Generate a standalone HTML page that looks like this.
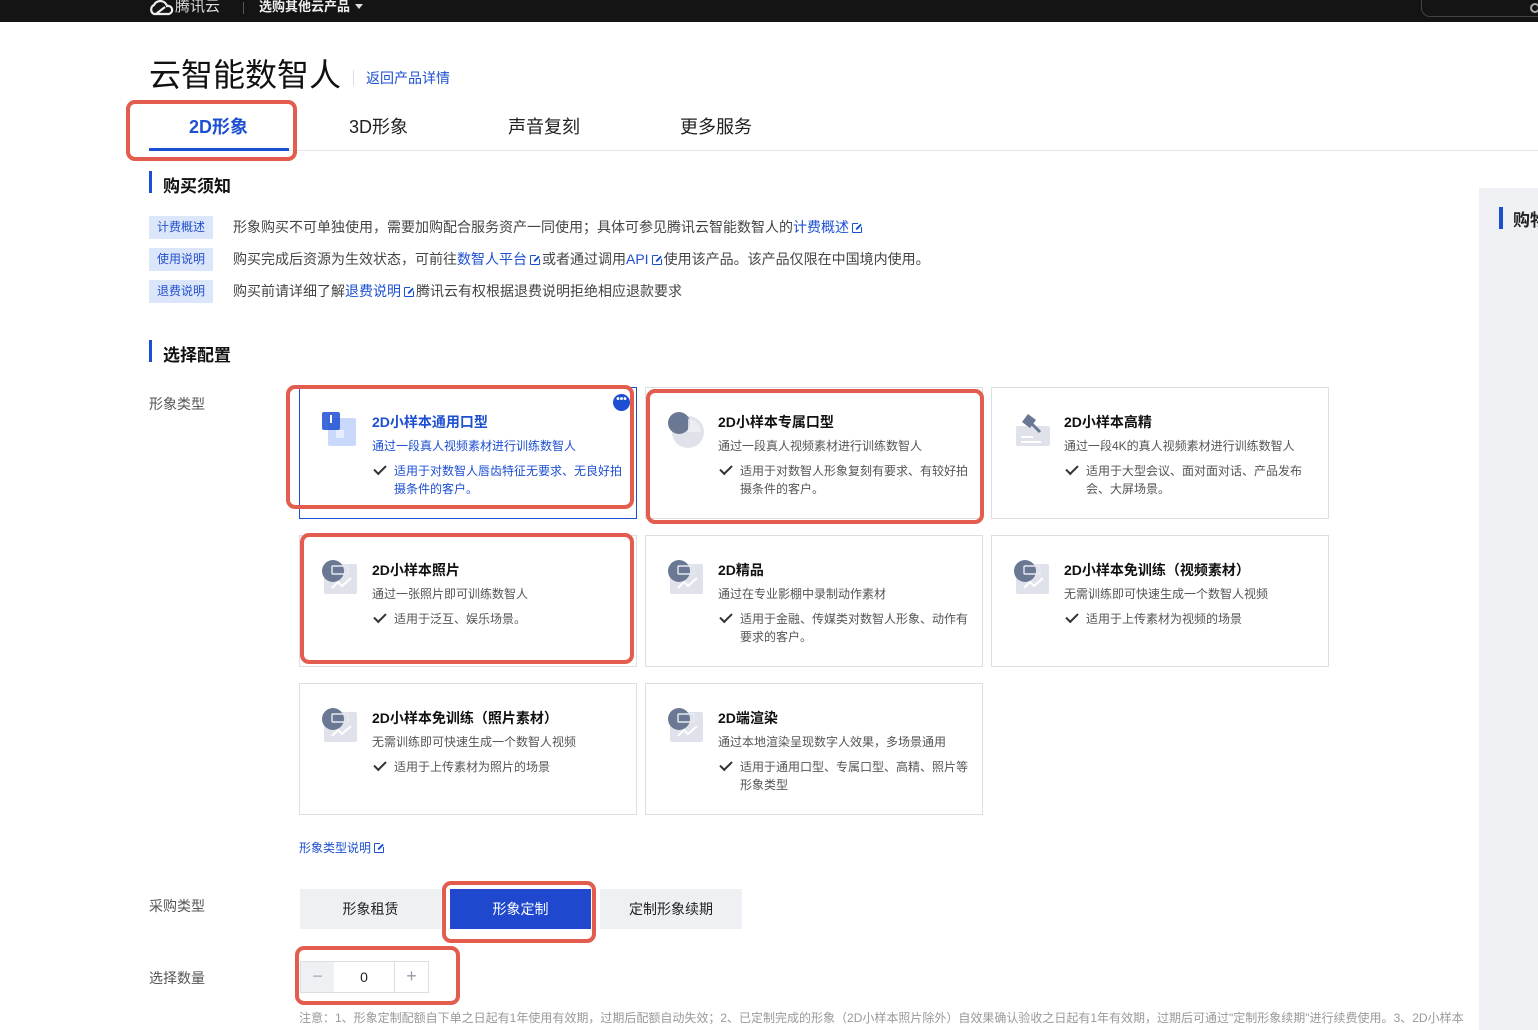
<!DOCTYPE html>
<html><head><meta charset="utf-8">
<style>
*{margin:0;padding:0;box-sizing:border-box}
body{width:1538px;height:1030px;position:relative;overflow:hidden;background:#fff;font-family:"Liberation Sans","Noto Sans CJK SC",sans-serif;color:#222}
.a{position:absolute;white-space:nowrap}
.red{position:absolute;border:4px solid #e35d4f;border-radius:9px}
.card{position:absolute;width:338px;height:132px;border:1px solid #dcdee3;background:#fff}
.card .ic{position:absolute;left:22px;top:24px;width:36px;height:36px}
.card .t{position:absolute;left:72px;top:24px;font-size:14px;font-weight:bold;color:#111}
.card .d{position:absolute;left:72px;top:49px;font-size:12px;color:#555}
.card .k{position:absolute;left:72px;top:74px;font-size:12px;color:#555;line-height:18px;width:258px;padding-left:22px;white-space:normal}
.card .k:before{content:"";position:absolute;left:2px;top:3px;width:10px;height:5px;border-left:2px solid #333;border-bottom:2px solid #333;transform:rotate(-45deg)}
.tag{position:absolute;left:149px;width:64px;height:23px;background:#dbe6fb;color:#2350cc;font-size:12px;text-align:center;line-height:23px}
.row{position:absolute;left:233px;font-size:14px;color:#444;white-space:nowrap}
.bl{color:#1d4fd1}
.ext{display:inline-block;width:10px;height:10px;border:1.6px solid #1d4fd1;margin:0 2px 0 3px;vertical-align:-1px;position:relative;border-radius:1px}
.ext:after{content:"";position:absolute;right:-2px;top:-2px;width:5px;height:5px;background:#fff;}
.ext:before{content:"";position:absolute;right:-1px;top:2px;width:7px;height:1.6px;background:#1d4fd1;transform:rotate(-45deg);z-index:1}
.h2{position:absolute;left:149px;font-size:17px;font-weight:bold;color:#111;padding-left:14px}
.h2:before{content:"";position:absolute;left:0;top:-1px;width:3px;height:22px;background:#1d4fd1}
.lbl{position:absolute;left:149px;font-size:14px;color:#555}
.btn{position:absolute;top:889px;height:40px;font-size:14px;text-align:center;line-height:40px;background:#eef0f3;color:#222}
</style></head><body>
<div class="a" style="left:0;top:0;width:1538px;height:22px;background:#141414"></div>
<svg class="a" style="left:148px;top:0" width="28" height="16" viewBox="0 0 28 16"><path d="M6 14a5 5 0 0 1 0-9a7 7 0 0 1 13 1a4 4 0 0 1 2 8z M8 14l9-7" fill="none" stroke="#eee" stroke-width="2.2"/></svg>
<div class="a" style="left:175px;top:-5px;font-size:15px;color:#ddd">腾讯云</div>
<div class="a" style="left:243px;top:2px;width:1px;height:12px;background:#555"></div>
<div class="a" style="left:259px;top:-4px;font-size:13px;font-weight:bold;color:#eee">选购其他云产品</div>
<div class="a" style="left:355px;top:4px;border:4px solid transparent;border-top:5px solid #ddd"></div>
<div class="a" style="left:1421px;top:-10px;width:140px;height:27px;border:1px solid #444;border-radius:9px"></div>
<div class="a" style="left:1530px;top:3px;width:10px;height:10px;border:2px solid #aaa;border-radius:50%"></div>

<div class="a" style="left:149px;top:50px;font-size:32px;color:#111">云智能数智人</div>
<div class="a" style="left:353px;top:70px;width:1px;height:16px;background:#ddd"></div>
<div class="a bl" style="left:366px;top:68px;font-size:14px">返回产品详情</div>

<div class="a" style="left:149px;top:150px;width:1389px;height:1px;background:#e3e5ea"></div>
<div class="a" style="left:189px;top:113px;font-size:18px;font-weight:bold;color:#1d4fd1">2D形象</div>
<div class="a" style="left:149px;top:148px;width:140px;height:3px;background:#1d4fd1"></div>
<div class="a" style="left:349px;top:113px;font-size:18px">3D形象</div>
<div class="a" style="left:508px;top:113px;font-size:18px">声音复刻</div>
<div class="a" style="left:680px;top:113px;font-size:18px">更多服务</div>
<div class="red" style="left:126px;top:100px;width:171px;height:61px"></div>

<div class="a" style="left:1479px;top:188px;width:59px;height:842px;background:#eef0f3"></div>
<div class="a" style="left:1499px;top:207px;width:4px;height:22px;background:#1d4fd1"></div>
<div class="a" style="left:1513px;top:206px;font-size:17px;font-weight:bold">购物</div>

<div class="h2" style="top:172px">购买须知</div>
<div class="tag" style="top:216px">计费概述</div>
<div class="tag" style="top:248px">使用说明</div>
<div class="tag" style="top:280px">退费说明</div>
<div class="row" style="top:217px">形象购买不可单独使用，需要加购配合服务资产一同使用；具体可参见腾讯云智能数智人的<span class="bl">计费概述</span><span class="ext"></span></div>
<div class="row" style="top:249px">购买完成后资源为生效状态，可前往<span class="bl">数智人平台</span><span class="ext"></span>或者通过调用<span class="bl">API</span><span class="ext"></span>使用该产品。该产品仅限在中国境内使用。</div>
<div class="row" style="top:281px">购买前请详细了解<span class="bl">退费说明</span><span class="ext"></span>腾讯云有权根据退费说明拒绝相应退款要求</div>

<div class="h2" style="top:341px">选择配置</div>
<div class="lbl" style="top:394px">形象类型</div>

<div class="card" style="left:299px;top:387px;border-color:#1d4fd1">
 <svg class="ic" viewBox="0 0 36 36"><rect x="6" y="6" width="28" height="28" rx="2" fill="#c9d9fb"/><rect x="0" y="0" width="18" height="18" rx="2" fill="#1d4fd1" opacity=".85"/><rect x="14" y="18" width="8" height="8" fill="#e6eefd"/><rect x="8" y="3" width="2" height="8" fill="#fff"/></svg>
 <div class="t" style="color:#1d4fd1">2D小样本通用口型</div>
 <div class="d" style="color:#1d4fd1">通过一段真人视频素材进行训练数智人</div>
 <div class="k" style="color:#1d4fd1">适用于对数智人唇齿特征无要求、无良好拍摄条件的客户。</div>
 <div style="position:absolute;right:6px;top:6px;width:17px;height:17px;border-radius:50%;background:#1d4fd1;color:#fff;font-size:10px;line-height:12px;text-align:center;font-weight:bold">•••</div>
</div>
<div class="card" style="left:645px;top:387px">
 <svg class="ic" viewBox="0 0 36 36"><circle cx="20" cy="20" r="16" fill="#dfe2ea"/><circle cx="11" cy="11" r="11" fill="#6b7894"/><path d="M20 7a13 13 0 0 1 13 13h-13z" fill="#eef0f4" opacity=".8"/></svg>
 <div class="t">2D小样本专属口型</div><div class="d">通过一段真人视频素材进行训练数智人</div>
 <div class="k">适用于对数智人形象复刻有要求、有较好拍摄条件的客户。</div>
</div>
<div class="card" style="left:991px;top:387px">
 <svg class="ic" viewBox="0 0 36 36"><rect x="2" y="14" width="34" height="20" rx="2" fill="#dfe2ea"/><path d="M14 2l8 6-6 8-8-6z" fill="#6b7894"/><path d="M18 12l8 8" stroke="#6b7894" stroke-width="3"/><rect x="7" y="24" width="12" height="2" fill="#fff"/><rect x="7" y="29" width="20" height="2" fill="#fff"/></svg>
 <div class="t">2D小样本高精</div><div class="d">通过一段4K的真人视频素材进行训练数智人</div>
 <div class="k">适用于大型会议、面对面对话、产品发布会、大屏场景。</div>
</div>

<div class="card" style="left:299px;top:535px">
 <svg class="ic" viewBox="0 0 36 36"><rect x="2" y="4" width="33" height="30" rx="2" fill="#dfe2ea"/><circle cx="11" cy="11" r="11" fill="#6b7894"/><rect x="10" y="6" width="16" height="8" rx="1" fill="none" stroke="#e8eaf0" stroke-width="1.4"/><path d="M10 28l6-6 4 4 9-8" fill="none" stroke="#fff" stroke-width="2"/></svg>
 <div class="t">2D小样本照片</div><div class="d">通过一张照片即可训练数智人</div>
 <div class="k">适用于泛互、娱乐场景。</div>
</div>
<div class="card" style="left:645px;top:535px">
 <svg class="ic" viewBox="0 0 36 36"><rect x="2" y="4" width="33" height="30" rx="2" fill="#dfe2ea"/><circle cx="11" cy="11" r="11" fill="#6b7894"/><rect x="10" y="6" width="16" height="8" rx="1" fill="none" stroke="#e8eaf0" stroke-width="1.4"/><path d="M10 28l6-6 4 4 9-8" fill="none" stroke="#fff" stroke-width="2"/></svg>
 <div class="t">2D精品</div><div class="d">通过在专业影棚中录制动作素材</div>
 <div class="k">适用于金融、传媒类对数智人形象、动作有要求的客户。</div>
</div>
<div class="card" style="left:991px;top:535px">
 <svg class="ic" viewBox="0 0 36 36"><rect x="2" y="4" width="33" height="30" rx="2" fill="#dfe2ea"/><circle cx="11" cy="11" r="11" fill="#6b7894"/><rect x="10" y="6" width="16" height="8" rx="1" fill="none" stroke="#e8eaf0" stroke-width="1.4"/><path d="M10 28l6-6 4 4 9-8" fill="none" stroke="#fff" stroke-width="2"/></svg>
 <div class="t">2D小样本免训练（视频素材）</div><div class="d">无需训练即可快速生成一个数智人视频</div>
 <div class="k">适用于上传素材为视频的场景</div>
</div>

<div class="card" style="left:299px;top:683px">
 <svg class="ic" viewBox="0 0 36 36"><rect x="2" y="4" width="33" height="30" rx="2" fill="#dfe2ea"/><circle cx="11" cy="11" r="11" fill="#6b7894"/><rect x="10" y="6" width="16" height="8" rx="1" fill="none" stroke="#e8eaf0" stroke-width="1.4"/><path d="M10 28l6-6 4 4 9-8" fill="none" stroke="#fff" stroke-width="2"/></svg>
 <div class="t">2D小样本免训练（照片素材）</div><div class="d">无需训练即可快速生成一个数智人视频</div>
 <div class="k">适用于上传素材为照片的场景</div>
</div>
<div class="card" style="left:645px;top:683px">
 <svg class="ic" viewBox="0 0 36 36"><rect x="2" y="4" width="33" height="30" rx="2" fill="#dfe2ea"/><circle cx="11" cy="11" r="11" fill="#6b7894"/><rect x="10" y="6" width="16" height="8" rx="1" fill="none" stroke="#e8eaf0" stroke-width="1.4"/><path d="M10 28l6-6 4 4 9-8" fill="none" stroke="#fff" stroke-width="2"/></svg>
 <div class="t">2D端渲染</div><div class="d">通过本地渲染呈现数字人效果，多场景通用</div>
 <div class="k">适用于通用口型、专属口型、高精、照片等形象类型</div>
</div>

<div class="red" style="left:286px;top:385px;width:348px;height:124px"></div>
<div class="red" style="left:646px;top:389px;width:338px;height:135px"></div>
<div class="red" style="left:300px;top:533px;width:334px;height:131px"></div>

<div class="a bl" style="left:299px;top:839px;font-size:12px">形象类型说明<span class="ext"></span></div>

<div class="lbl" style="top:896px">采购类型</div>
<div class="btn" style="left:300px;width:141px">形象租赁</div>
<div class="btn" style="left:450px;width:141px;background:#1f48cf;color:#fff">形象定制</div>
<div class="btn" style="left:600px;width:142px">定制形象续期</div>
<div class="red" style="left:442px;top:881px;width:154px;height:62px"></div>

<div class="lbl" style="top:968px">选择数量</div>
<div class="a" style="left:300px;top:961px;width:129px;height:32px;border:1px solid #dcdee3"></div>
<div class="a" style="left:301px;top:962px;width:33px;height:30px;background:#eef0f3;color:#aab;text-align:center;font-size:18px;line-height:28px">−</div>
<div class="a" style="left:394px;top:962px;width:1px;height:30px;background:#dcdee3"></div>
<div class="a" style="left:334px;top:962px;width:60px;height:30px;text-align:center;font-size:14px;line-height:30px">0</div>
<div class="a" style="left:395px;top:962px;width:33px;height:30px;color:#99a;text-align:center;font-size:18px;line-height:28px">+</div>
<div class="red" style="left:295px;top:946px;width:165px;height:59px"></div>

<div class="a" style="left:299px;top:1009px;font-size:12px;color:#999">注意：1、形象定制配额自下单之日起有1年使用有效期，过期后配额自动失效；2、已定制完成的形象（2D小样本照片除外）自效果确认验收之日起有1年有效期，过期后可通过"定制形象续期"进行续费使用。3、2D小样本</div>
<div class="a" style="left:1479px;top:1000px;width:59px;height:30px;background:#eef0f3"></div>
</body></html>
